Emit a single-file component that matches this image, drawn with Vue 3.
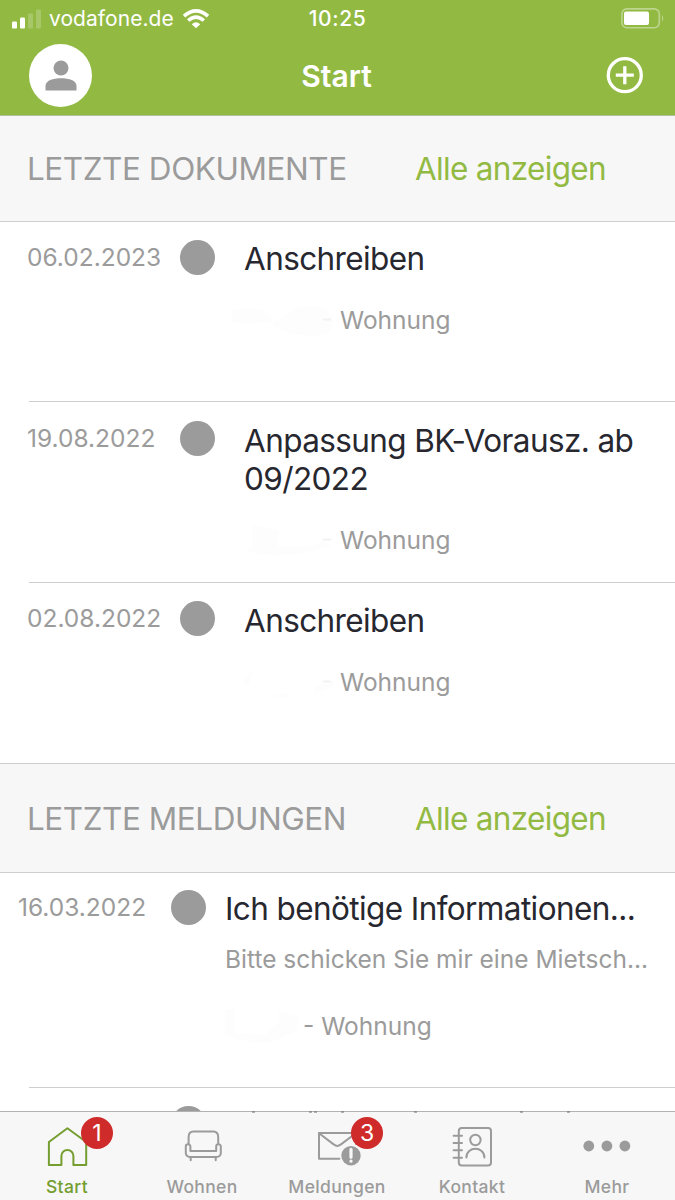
<script setup>
const documents = [
  { date: '06.02.2023', title: 'Anschreiben', smudge: 'M-12 8 Q10 0 26 12 L30 24 Q60 38 84 30 Q94 18 82 6 Q60 0 48 8 L34 18 Q10 22 -12 20 Z' },
  { date: '19.08.2022', title: 'Anpassung BK-Vorausz. ab 09/2022', smudge: 'M8 2 L18 4 L34 8 V24 H64 L80 18 L88 22 L60 30 Q30 36 2 28 L8 22 Z' },
  { date: '02.08.2022', title: 'Anschreiben', smudge: 'M0 14 L8 6 L6 18 L0 22 Z M70 22 L90 16 V22 L72 28 Z M30 30 L44 28 V32 H30 Z' }
]

const messages = [
  {
    date: '16.03.2022',
    title: 'Ich benötige Informationen...',
    text: 'Bitte schicken Sie mir eine Mietsch...'
  }
]

const tabs = [
  { id: 'start', label: 'Start', badge: 1 },
  { id: 'wohnen', label: 'Wohnen' },
  { id: 'meldungen', label: 'Meldungen', badge: 3 },
  { id: 'kontakt', label: 'Kontakt' },
  { id: 'mehr', label: 'Mehr' }
]

const activeTab = 'start'
</script>

<template>
  <div class="app">
    <header class="header">
      <div class="status-bar">
        <div class="carrier">
          <svg class="signal" width="30" height="20" viewBox="0 0 30 20">
            <rect x="0" y="12.5" width="5" height="7" rx="1.3" />
            <rect x="8" y="8.5" width="5" height="11" rx="1.3" />
            <rect class="weak" x="16" y="4.5" width="5" height="15" rx="1.3" />
            <rect class="weak" x="24" y="0.5" width="5" height="19" rx="1.3" />
          </svg>
          <span class="carrier-name">vodafone.de</span>
          <svg class="wifi" width="28" height="20" viewBox="0 0 28 20">
            <path d="M2 7.2 Q14 -3.6 26 7.2" />
            <path d="M6.2 11.5 Q14 4.6 21.8 11.5" />
            <path class="wifi-dot" d="M14 19.2 L9.8 15.2 Q14 11.4 18.2 15.2 Z" />
          </svg>
        </div>
        <span class="time">10:25</span>
        <svg class="battery" width="44" height="22" viewBox="0 0 44 22">
          <rect class="battery-case" x="0.9" y="0.9" width="37.4" height="18.8" rx="5" />
          <rect x="3" y="3.6" width="25" height="13.4" rx="2" />
          <path class="weak-tip" d="M41 7 Q43.4 10.3 41 13.6 Z" />
        </svg>
      </div>

      <div class="nav-bar">
        <div class="avatar">
          <svg width="32" height="32" viewBox="0 0 32 32">
            <circle cx="16" cy="8" r="7.5" />
            <path d="M0.5 30.6 V25.6 C0.5 20.6 8 18.2 16 18.2 S31.5 20.6 31.5 25.6 V30.6 Z" />
          </svg>
        </div>
        <h1 class="nav-title">Start</h1>
        <svg class="add" width="38" height="38" viewBox="0 0 38 38">
          <circle cx="18.8" cy="18.2" r="16.5" />
          <path d="M9.8 18.2 H27.8 M18.8 9.2 V27.2" />
        </svg>
      </div>
    </header>

    <main class="content">
      <div class="section-head">
        <h2 class="section-title">LETZTE DOKUMENTE</h2>
        <a class="show-all">Alle anzeigen</a>
      </div>
      <div class="documents">
        <article v-for="doc in documents" :key="doc.date" class="row">
          <div class="lead">
            <span class="date">{{ doc.date }}</span>
            <span class="dot"></span>
          </div>
          <div class="body">
            <h3 class="row-title">{{ doc.title }}</h3>
            <div class="place">
              <svg class="smudge" width="96" height="34" viewBox="0 0 96 34">
                <path :d="doc.smudge" />
                <path class="smudge-dash" d="M79 16.5 H87" />
              </svg>
              <span>Wohnung</span>
            </div>
          </div>
        </article>
      </div>

      <div class="section-head messages-head">
        <h2 class="section-title">LETZTE MELDUNGEN</h2>
        <a class="show-all">Alle anzeigen</a>
      </div>
      <div class="messages">
        <article v-for="msg in messages" :key="msg.date" class="row">
          <div class="lead">
            <span class="date">{{ msg.date }}</span>
            <span class="dot"></span>
          </div>
          <div class="body">
            <h3 class="row-title">{{ msg.title }}</h3>
            <p class="row-text">{{ msg.text }}</p>
            <div class="place">
              <svg class="smudge" width="78" height="34" viewBox="0 0 78 34">
                <path d="M0 0 H10 V24 L40 26 L54 12 V2 L74 8 L72 22 L44 34 Q20 34 0 26 Z" />
              </svg>
              <span>- Wohnung</span>
            </div>
          </div>
        </article>
        <!-- next message, scrolled under the tab bar -->
        <article class="row row-cut">
          <div class="lead">
            <span class="date"></span>
            <span class="dot"></span>
          </div>
        </article>
      </div>
    </main>

    <nav class="tab-bar">
      <svg class="cut-marks" width="675" height="2" viewBox="0 0 675 2">
        <path d="M252 1 h3 M309 1 h3 M314 1 h3 M341 1 h3 M414 1 h3 M520 1 h3 M567 1 h3" />
      </svg>
      <div
        v-for="tab in tabs"
        :key="tab.id"
        class="tab"
        :class="{ active: tab.id === activeTab }"
      >
        <div class="tab-icon">
          <svg width="48" height="44" viewBox="0 0 48 44">
            <path
              v-if="tab.id === 'start'"
              d="M23.4 4.3 L42.2 18 V41 H29.4 V32 a6 6 0 0 0 -12 0 V41 H4.9 V18 Z"
            />
            <g v-else-if="tab.id === 'wohnen'">
              <path d="M9.6 20 V13 C9.6 9 10.9 7.4 14.4 7.4 H34.4 C37.9 7.4 39.2 9 39.2 13 V20" />
              <path d="M11.4 27 V22.5 a2.3 2.3 0 0 0 -4.6 0 V29 a4 4 0 0 0 4 4 H37.8 a4 4 0 0 0 4 -4 V22.5 a2.3 2.3 0 0 0 -4.6 0 V27 Z" />
              <path d="M11.7 33 V36.2 M36.7 33 V36.2" />
            </g>
            <g v-else-if="tab.id === 'meldungen'">
              <path d="M25.4 34.7 H5 V8.9 H42 V20" />
              <path d="M5 9.2 L20 20.6 Q23.3 23.4 26.6 20.6 L41.8 9.2" />
              <circle class="solid" cx="37" cy="31.7" r="9.7" />
              <path class="mark" d="M37 25.4 V33.2 M37 37 V37.2" />
            </g>
            <g v-else-if="tab.id === 'kontakt'">
              <rect x="9.8" y="4" width="32.2" height="37.4" rx="3" />
              <path d="M4.6 11.7 H13 M4.6 19 H13 M4.6 26.3 H13 M4.6 33.7 H13" />
              <circle cx="26.4" cy="16" r="5.2" />
              <path d="M17.4 33.4 C17.4 22 35.4 22 35.4 33.4" />
            </g>
            <g v-else>
              <circle class="solid" cx="4.8" cy="22" r="5.4" />
              <circle class="solid" cx="22.9" cy="22" r="5.4" />
              <circle class="solid" cx="40.9" cy="22" r="5.4" />
            </g>
          </svg>
          <span v-if="tab.badge" class="badge">{{ tab.badge }}</span>
        </div>
        <span class="tab-label">{{ tab.label }}</span>
      </div>
    </nav>
  </div>
</template>

<style>
body {
  margin: 0;
  background: #fff;
}
</style>

<style scoped>
.app {
  display: flex;
  flex-direction: column;
  width: 675px;
  height: 1200px;
  overflow: hidden;
  background: #fff;
  color: #9b9b9b;
  font-family: Inter, "Liberation Sans", sans-serif;
}

h1,
h2,
h3,
p {
  margin: 0;
  font-weight: 400;
}

svg {
  display: block;
  flex: none;
  overflow: visible;
}

.header {
  box-sizing: border-box;
  height: 116px;
  flex: none;
  background: #92ba43;
  border-bottom: 1px solid #b3bda0;
  color: #fff;
}

.status-bar {
  display: grid;
  grid-template-columns: 1fr auto 1fr;
  align-items: center;
  height: 36px;
  padding: 0 10px 0 12px;
  fill: #fff;
}

.carrier {
  display: flex;
  align-items: center;
}

.carrier-name {
  margin-left: 7px;
  padding-top: 1px;
  font-size: 21px;
  line-height: 36px;
  letter-spacing: 0.05px;
}

.wifi {
  margin-left: 8px;
}

.wifi path {
  fill: none;
  stroke: #fff;
  stroke-width: 3.6;
}

.wifi .wifi-dot {
  fill: #fff;
  stroke: none;
}

.weak {
  opacity: 0.2;
}

.time {
  padding: 1px 2px 0 0;
  font-size: 21px;
  font-weight: 500;
  line-height: 36px;
  letter-spacing: 0.6px;
}

.battery {
  justify-self: end;
}

.battery-case {
  fill: none;
  stroke: #fff;
  stroke-width: 1.6;
  opacity: 0.4;
}

.weak-tip {
  opacity: 0.4;
}

.nav-bar {
  display: grid;
  grid-template-columns: 1fr auto 1fr;
  align-items: center;
  height: 79px;
  padding: 0 31px 0 29px;
}

.avatar {
  display: flex;
  align-items: center;
  justify-content: center;
  width: 63px;
  height: 63px;
  border-radius: 50%;
  background: #fff;
  fill: #9b9b9b;
}

.nav-title {
  font-size: 30px;
  font-weight: 600;
  line-height: 36px;
}

.add {
  justify-self: end;
  fill: none;
  stroke: #fff;
  stroke-width: 3.3;
}

.content {
  flex: 1;
  min-height: 0;
  overflow: hidden;
}

.section-head {
  box-sizing: border-box;
  display: flex;
  align-items: center;
  height: 106px;
  padding-left: 27px;
  background: #f7f7f7;
  border-bottom: 1px solid #cfcfcf;
  font-size: 31.5px;
  line-height: 40px;
}

.messages-head {
  height: 110px;
  padding-top: 1px;
  border-top: 1px solid #cfcfcf;
}

.section-title {
  width: 388px;
  font-size: inherit;
  letter-spacing: -0.45px;
  white-space: nowrap;
}

.show-all {
  color: #92ba43;
  letter-spacing: -0.68px;
  white-space: nowrap;
}

.row {
  box-sizing: border-box;
  display: flex;
  height: 180px;
  margin-left: 29px;
  padding-top: 18px;
  border-bottom: 1px solid #cfcfcf;
}

.row:nth-child(2) {
  height: 181px;
  padding-top: 19px;
}

.row:nth-child(2) .body,
.row:nth-child(3) .body {
  padding-top: 1px;
}

.documents .row:last-child {
  border-bottom: 0;
}

.lead {
  display: flex;
  align-items: center;
  height: 35px;
  flex: none;
}

.date {
  width: 153px;
  margin: 0 0 1px -2px;
  font-size: 24.5px;
  line-height: 30px;
  white-space: nowrap;
}

.dot {
  width: 35px;
  height: 35px;
  border-radius: 50%;
  background: #9b9b9b;
}

.body {
  width: 415px;
  margin-left: 29px;
}

.row-title {
  color: #27272f;
  font-size: 31.5px;
  line-height: 37.5px;
  letter-spacing: -0.6px;
}

.row-text {
  margin-top: 16px;
  font-size: 24.5px;
  line-height: 30px;
  white-space: nowrap;
}

.place {
  display: flex;
  align-items: center;
  height: 30px;
  margin-top: 27.5px;
  font-size: 24.5px;
  line-height: 30px;
}

.smudge {
  fill: #fdfdfd;
}

.smudge-dash {
  stroke: #f2f2f2;
  stroke-width: 2;
}

.messages .row {
  height: 215px;
  padding-top: 17px;
}

.messages .row-cut {
  padding-top: 18px;
}

.messages .lead {
  margin-left: -9px;
}

.messages .body {
  width: 440px;
  padding-top: 0;
  margin-left: 19px;
}

.messages .row-title {
  white-space: nowrap;
}

.messages .place {
  margin-top: 37px;
}

.tab-bar {
  position: relative;
  box-sizing: border-box;
  display: flex;
  flex: none;
  height: 89px;
  padding-top: 12px;
  background: #f7f7f7;
  border-top: 1px solid #b2b2b2;
}

.cut-marks {
  position: absolute;
  top: -1.5px;
  left: 0;
  stroke: #6a6a6e;
  stroke-width: 1;
}

.tab {
  display: flex;
  flex: 1;
  flex-direction: column;
  align-items: center;
  color: #9b9b9b;
}

.tab.active {
  color: #759e31;
}

.tab-icon {
  position: relative;
}

.tab-icon svg {
  fill: none;
  stroke: currentColor;
  stroke-width: 2;
  stroke-linejoin: round;
  stroke-linecap: round;
}

.tab-icon .solid {
  fill: currentColor;
  stroke: none;
}

.tab-icon .mark {
  stroke: #f7f7f7;
  stroke-width: 3.2;
}

.badge {
  position: absolute;
  top: -7px;
  left: 37.5px;
  width: 32px;
  height: 32px;
  border-radius: 50%;
  background: #d02b2b;
  color: #fff;
  font-size: 23px;
  line-height: 32px;
  text-align: center;
}

.tab-label {
  margin-top: 8px;
  padding-right: 1px;
  font-size: 17.5px;
  font-weight: 500;
  line-height: 22px;
  letter-spacing: 0.35px;
}
</style>
